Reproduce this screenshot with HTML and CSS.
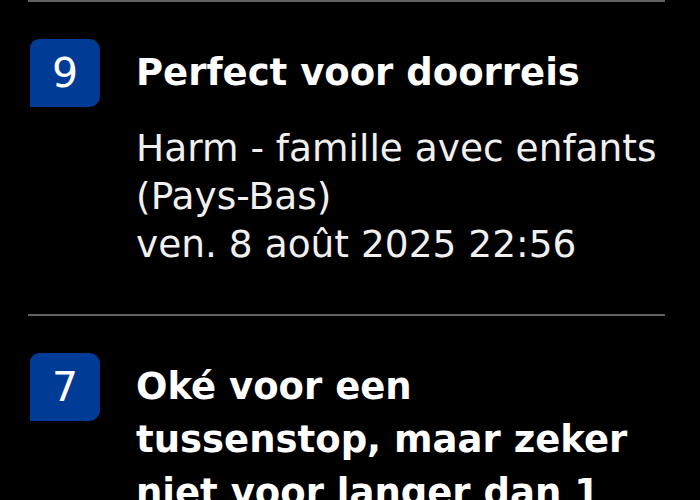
FILE: index.html
```html
<!DOCTYPE html>
<html lang="fr">
<head>
    <meta charset="UTF-8">
    <meta name="viewport" content="width=device-width, initial-scale=1.0">
    <title>Avis</title>
    <link rel="stylesheet" href="styles.css">
</head>
<body>
    <div class="review-list">
        <div class="review">
            <div class="score">9</div>
            <div class="review-body">
                <h2 class="review-title">Perfect voor doorreis</h2>
                <p class="review-meta">Harm - famille avec enfants (Pays-Bas)</p>
                <p class="review-date">ven. 8 août 2025 22:56</p>
            </div>
        </div>
        <div class="review">
            <div class="score">7</div>
            <div class="review-body">
                <h2 class="review-title">Oké voor een tussenstop, maar zeker niet voor langer dan 1 nacht</h2>
                <p class="review-meta">Gilles - couple (Pays-Bas)</p>
            </div>
        </div>
    </div>
</body>
</html>
```

FILE: styles.css
```css
html, body {
    margin: 0;
    padding: 0;
    background-color: #000;
    height: 100%;
    overflow: hidden;
}
body {
    font-family: "DejaVu Sans", Arial, sans-serif;
    color: #f0f0f0;
}
.review-list {
    margin: 0 35px 0 28px;
}
.review {
    display: flex;
    align-items: flex-start;
    gap: 36px;
    border-top: 2px solid #626262;
    padding: 37px 0 46px;
}
.score {
    flex: 0 0 70px;
    height: 68px;
    margin-left: 2px;
    background-color: #003b95;
    color: #fff;
    border-radius: 9px 11px 11px 0;
    display: flex;
    justify-content: center;
    align-items: center;
    font-size: 41px;
}
.review-body {
    flex: 1;
    min-width: 0;
    margin-top: 7px;
}
.review-title {
    margin: 0;
    font-size: 37px;
    line-height: 53px;
    font-weight: 700;
    color: #fff;
}
.review-meta, .review-date {
    margin: 0;
    font-size: 37.5px;
    line-height: 48px;
}
.review-meta {
    margin-top: 25px;
}
```
